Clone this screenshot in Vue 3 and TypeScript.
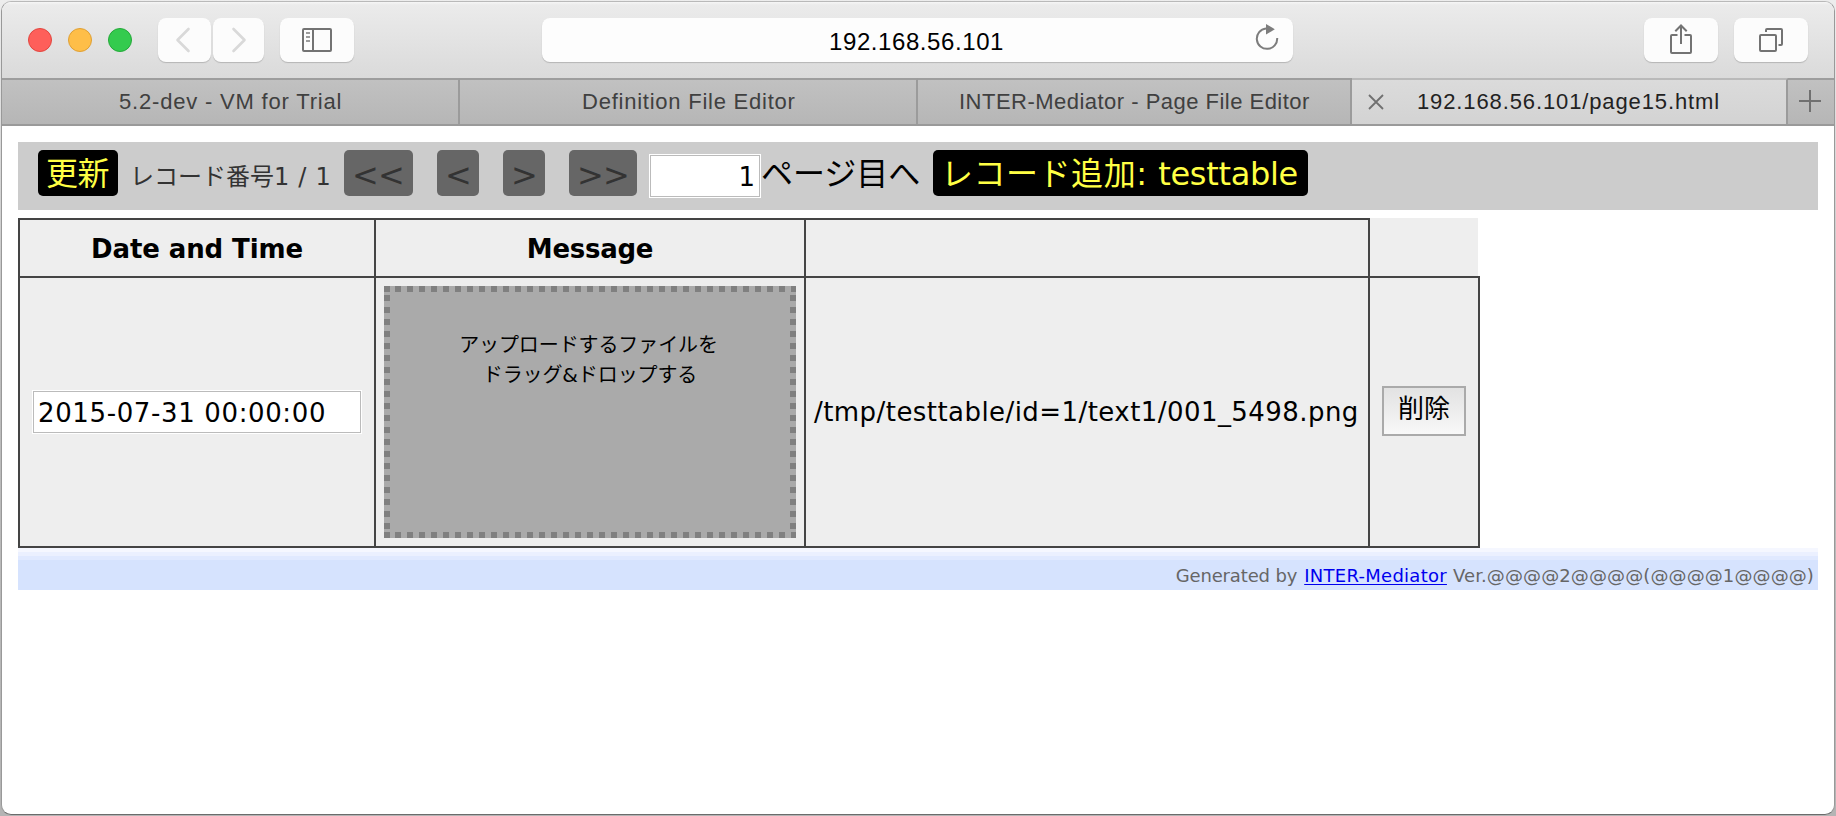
<script setup lang="ts">
import { ref } from 'vue'

interface Tab {
  title: string
  cls: string
  active?: boolean
}

const tabs: Tab[] = [
  { title: '5.2-dev - VM for Trial', cls: 'tab-trial' },
  { title: 'Definition File Editor', cls: 'tab-definition' },
  { title: 'INTER-Mediator - Page File Editor', cls: 'tab-page' },
  { title: '192.168.56.101/page15.html', cls: 'tab-current', active: true },
]

const address = '192.168.56.101'
const page = ref(1)
const dateTime = ref('2015-07-31 00:00:00')
const filePath = '/tmp/testtable/id=1/text1/001_5498.png'
</script>

<template>
  <div class="desktop" lang="ja">
    <div class="window">
      <header class="toolbar">
        <div class="lights">
          <i class="light red"></i><i class="light yellow"></i><i class="light green"></i>
        </div>
        <button class="tool back" aria-label="Back">
          <svg width="53" height="44"><path d="M30.5 11 19.5 22 30.5 33" fill="none" stroke="#d9d9d9" stroke-width="2.6" stroke-linecap="round" stroke-linejoin="round" /></svg>
        </button>
        <button class="tool forward" aria-label="Forward">
          <svg width="51" height="44"><path d="M20.5 11 31.5 22 20.5 33" fill="none" stroke="#d9d9d9" stroke-width="2.6" stroke-linecap="round" stroke-linejoin="round" /></svg>
        </button>
        <button class="tool sidebar" aria-label="Sidebar">
          <svg width="74" height="44" fill="none" stroke="#737373" stroke-width="2">
            <rect x="23" y="11" width="28" height="22" rx="1" />
            <path d="M33 11v22" />
            <path d="M26 15h4M26 19h4M26 23h4" stroke="#9c9c9c" />
          </svg>
        </button>
        <div class="address">
          <span>{{ address }}</span>
          <svg class="reload" width="30" height="36">
            <path d="M14 11.5A10.2 10.2 0 1 0 25.2 21" fill="none" stroke="#7d7d7d" stroke-width="2" />
            <path d="M14 7 22.8 12.2 14 17.6z" fill="#7d7d7d" />
          </svg>
        </div>
        <button class="tool share" aria-label="Share">
          <svg width="74" height="44" fill="none" stroke="#737373" stroke-width="2">
            <path d="M33.500 17H28a1 1 0 0 0-1 1v16a1 1 0 0 0 1 1h18a1 1 0 0 0 1-1V18a1 1 0 0 0-1-1h-5.500" />
            <path d="M37 26V8M31.300 13.200 37 7.500l5.700 5.700" />
          </svg>
        </button>
        <button class="tool overview" aria-label="Tab overview">
          <svg width="74" height="44" fill="none" stroke="#737373" stroke-width="2">
            <rect x="26" y="17" width="16" height="16" rx="1" />
            <path d="M32 14v-2a1 1 0 0 1 1-1h14a1 1 0 0 1 1 1v14a1 1 0 0 1-1 1h-2.500" />
          </svg>
        </button>
      </header>

      <nav class="tabs">
        <div v-for="t in tabs" :key="t.title" class="tab" :class="[t.cls, { active: t.active }]">
          <svg v-if="t.active" class="close" width="18" height="18"><path d="M2 2 16 16M16 2 2 16" stroke="#707070" stroke-width="1.8" /></svg>
          <span>{{ t.title }}</span>
        </div>
        <div class="new-tab">
          <svg width="22" height="22"><path d="M11 0v22M0 11h22" stroke="#707070" stroke-width="2" /></svg>
        </div>
      </nav>

      <main class="page">
        <div class="navigation">
          <span class="nav-btn update">更新</span>
          <span class="info">レコード番号<b>1 / 1</b></span>
          <span class="nav-btn off first">&lt;&lt;</span>
          <span class="nav-btn off prev">&lt;</span>
          <span class="nav-btn off next">&gt;</span>
          <span class="nav-btn off last">&gt;&gt;</span>
          <input v-model="page" class="field page-no" type="text" />
          <span class="go">ページ目へ</span>
          <span class="nav-btn insert"><em>レコード追加: </em>testtable</span>
        </div>

        <div class="records">
          <div class="cell head head-date">Date and Time</div>
          <div class="cell head head-message">Message</div>
          <div class="cell head"></div>
          <div class="cell head-tail"></div>
          <div class="cell date"><input v-model="dateTime" class="field" type="text" /></div>
          <div class="cell upload">
            <div class="drop">
              <p>アップロードするファイルを</p>
              <p class="second">ドラッグ&amp;ドロップする</p>
            </div>
          </div>
          <div class="cell path">{{ filePath }}</div>
          <div class="cell action"><button class="delete">削除</button></div>
        </div>

        <footer class="credit">
          <span class="gen">Generated by</span>
          <a href="#">INTER-Mediator</a>
          <span class="ver">Ver.@@@@2@@@@(@@@@1@@@@)</span>
        </footer>
      </main>
    </div>
  </div>
</template>

<style>
html,
body {
  margin: 0;
  overflow: hidden;
}
</style>

<style scoped>
* {
  box-sizing: border-box;
}
.desktop {
  width: 1836px;
  height: 816px;
  padding: 1px;
  background: linear-gradient(#ededed, #bdbdbd 45%, #b4b4b4);
  font-family: 'DejaVu Sans', 'Noto Sans CJK JP', sans-serif;
}
.window {
  display: flex;
  flex-direction: column;
  width: 1834px;
  height: 814px;
  border: 1px solid #999;
  border-top-color: #b9b9b9;
  border-bottom-color: #6b6b6b;
  border-radius: 10px;
  overflow: hidden;
  background: #fff;
}
.toolbar {
  display: flex;
  flex: none;
  height: 76px;
  padding-top: 16px;
  background: linear-gradient(#f6f6f6, #ebebeb 3px, #dadada);
}
.lights {
  display: flex;
  gap: 16px;
  margin: 10px 0 0 26px;
}
.light {
  width: 24px;
  height: 24px;
  border-radius: 50%;
  border: 1px solid;
}
.red {
  background: #fe5f5a;
  border-color: #e2463f;
}
.yellow {
  background: #febe48;
  border-color: #dfa035;
}
.green {
  background: #34cb4e;
  border-color: #24a939;
}
.tool {
  flex: none;
  width: 74px;
  height: 44px;
  padding: 0;
  border: 0;
  border-radius: 8px;
  background: #fcfcfc;
  box-shadow: 0 1px 1px #b5b5b5;
}
.tool svg {
  display: block;
}
.back {
  width: 53px;
  margin-left: 26px;
}
.forward {
  width: 51px;
  margin-left: 2px;
}
.sidebar {
  margin-left: 16px;
}
.address {
  display: flex;
  justify-content: flex-end;
  flex: none;
  width: 751px;
  height: 44px;
  margin-left: 188px;
  padding-top: 2px;
  border-radius: 8px;
  background: #fdfdfd;
  box-shadow: 0 1px 1px #b5b5b5;
  font: 24px/44px 'Liberation Sans', sans-serif;
  letter-spacing: 0.58px;
}
.reload {
  flex: none;
  margin: -3px 11px 0 248px;
}
.share {
  margin-left: 351px;
}
.overview {
  margin-left: 16px;
}
.tabs {
  display: flex;
  flex: none;
  height: 48px;
  border-bottom: 2px solid #9a9a9a;
  font: 22px/44px 'Liberation Sans', sans-serif;
  color: #404040;
}
.tab,
.new-tab {
  flex: none;
  border-top: 2px solid #9d9d9d;
  border-right: 2px solid #9b9b9b;
  background: linear-gradient(#c1c1c1, #b6b6b6);
}
.tab {
  white-space: nowrap;
}
.tab-trial {
  width: 458px;
  padding-left: 117px;
  letter-spacing: 0.81px;
}
.tab-definition {
  width: 458px;
  padding-left: 122px;
  letter-spacing: 0.76px;
}
.tab-page {
  width: 434px;
  padding-left: 41px;
  letter-spacing: 0.48px;
}
.tab-current {
  display: flex;
  width: 436px;
  letter-spacing: 0.88px;
}
.tab.active {
  border-top-color: #b9b9b9;
  background: linear-gradient(#dbdbdb, #d3d3d3);
  color: #222;
}
.close {
  margin: 13px 32px 0 15px;
}
.new-tab {
  flex: 1;
  border-right: 0;
}
.new-tab svg {
  display: block;
  margin: 10px 0 0 11px;
}
.page {
  padding: 16px 16px 0;
}
.navigation {
  display: flex;
  height: 68px;
  padding: 8px 0 0 20px;
  background: #ccc;
  font-size: 32px;
  line-height: 46px;
  white-space: nowrap;
}
.nav-btn {
  flex: none;
  height: 46px;
  padding-top: 1px;
  border-radius: 5px;
  background: #000;
  color: #ffff44;
  line-height: 46px;
}
.off {
  padding-top: 2px;
  background: #666;
  color: #333;
}
.update {
  width: 80px;
  padding-left: 8px;
  letter-spacing: -0.5px;
}
.info {
  width: 214px;
  margin-left: 12px;
  padding-top: 4px;
  font-size: 24px;
  color: #333;
}
.info b {
  font-weight: normal;
  letter-spacing: 0.7px;
}
.first {
  width: 69px;
  padding-left: 8px;
}
.first,
.last {
  letter-spacing: -0.7px;
}
.prev {
  width: 42px;
  margin-left: 24px;
  padding-left: 8px;
}
.next {
  width: 42px;
  margin-left: 24px;
  padding-left: 8px;
}
.last {
  width: 68px;
  margin-left: 24px;
  padding-left: 8px;
}
.field {
  display: block;
  flex: none;
  height: 44px;
  margin: 0;
  padding: 1px 6px 0 5px;
  border: 1px solid #fff;
  border-radius: 0;
  outline: 1px solid #bbb;
  outline-offset: -2px;
  background: #fff;
  color: #000;
  font: 26px/40px 'DejaVu Sans', sans-serif;
}
.page-no {
  width: 112px;
  margin: 4px 0 0 12px;
  padding-right: 5px;
  text-align: right;
}
.go {
  width: 172px;
  padding-top: 1px;
}
.insert {
  width: 375px;
  padding-left: 8px;
  letter-spacing: -0.3px;
}
.insert em {
  font-style: normal;
  letter-spacing: 0.53px;
}
.records {
  display: grid;
  grid-template-columns: 356px 430px 564px 110px;
  grid-template-rows: 60px 270px;
  width: 1462px;
  margin-top: 8px;
  border-left: 2px solid #444;
  font-size: 26px;
}
.cell {
  border-right: 2px solid #444;
  border-bottom: 2px solid #444;
  background: #eee;
}
.head {
  padding-top: 1px;
  border-top: 2px solid #444;
  text-align: center;
  font-weight: bold;
  line-height: 57px;
}
.head-date {
  letter-spacing: -0.1px;
}
.head-message {
  letter-spacing: -0.27px;
}
.head-tail {
  border-right: 0;
  background: linear-gradient(#eee, #eee) no-repeat 0 0 / 108px 100%;
}
.date {
  padding: 112px 0 0 12px;
}
.date .field {
  width: 330px;
  letter-spacing: 0.63px;
}
.upload {
  padding: 8px;
}
.drop {
  width: 412px;
  height: 252px;
  padding-top: 44px;
  text-align: center;
  font-size: 20px;
  line-height: 30px;
  background:
    linear-gradient(#808080, #808080) 0 0 / 6px 6px no-repeat,
    linear-gradient(#808080, #808080) 0 100% / 6px 6px no-repeat,
    repeating-linear-gradient(90deg, #808080 0 5px, #aaa 5px 11px, #808080 11px 12px) 0 0 / 100% 6px no-repeat,
    repeating-linear-gradient(90deg, #808080 0 5px, #aaa 5px 11px, #808080 11px 12px) 0 100% / 100% 6px no-repeat,
    repeating-linear-gradient(#aaa 0 3px, #808080 3px 9px, #aaa 9px 12px) 0 6px / 6px 240px no-repeat,
    repeating-linear-gradient(#aaa 0 3px, #808080 3px 9px, #aaa 9px 12px) 100% 6px / 6px 240px no-repeat,
    #aaa;
}
.drop p {
  margin: 0;
  padding-right: 3px;
  letter-spacing: -0.1px;
}
.drop .second {
  padding-right: 0;
}
.path {
  padding-left: 8px;
  line-height: 268px;
  letter-spacing: 0.44px;
  white-space: nowrap;
}
.action {
  padding: 108px 0 0 12px;
}
.delete {
  display: block;
  width: 84px;
  height: 50px;
  padding: 0 0 4px;
  border: 2px solid #aaa;
  background: linear-gradient(#e2e2e2, #f8f8f8);
  color: #000;
  font: 26px/42px 'DejaVu Sans', 'Noto Sans CJK JP', sans-serif;
}
.credit {
  display: flex;
  justify-content: flex-end;
  height: 42px;
  padding: 12px 4px 0 0;
  background: linear-gradient(#f5f7ff 0 4px, #ebf0ff 4px 8px, #e0e9ff 8px 12px, #d6e3fe 12px);
  color: #666;
  font-size: 18px;
  line-height: 32px;
  white-space: nowrap;
}
.gen {
  letter-spacing: -0.15px;
}
.credit a {
  margin: 0 6px 0 7px;
  color: #00e;
  letter-spacing: 0.27px;
  text-underline-offset: 2px;
  text-decoration-thickness: 1px;
}
.ver {
  letter-spacing: 0.11px;
}
</style>
